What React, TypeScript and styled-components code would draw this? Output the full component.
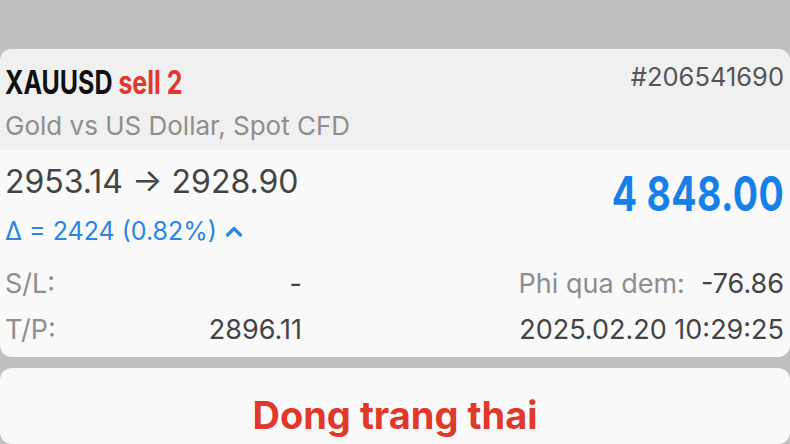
import React from 'react';
import styled, { createGlobalStyle } from 'styled-components';

const GlobalStyle = createGlobalStyle`
  html, body {
    margin: 0;
    padding: 0;
    background: #c0c0c0;
  }
  body {
    font-family: Inter, "Liberation Sans", Arial, sans-serif;
  }
`;

const Page = styled.div`
  width: 790px;
  height: 444px;
  overflow: hidden;
  padding-top: 49px;
  box-sizing: border-box;
  display: flex;
  flex-direction: column;
  gap: 11px;
`;

const Card = styled.div`
  background: #f9f9f9;
  border-radius: 12px;
  overflow: hidden;
`;

const Header = styled.div`
  background: #f0f0f0;
  height: 101px;
  box-sizing: border-box;
  padding: 13px 6px 0 5px;
  display: flex;
  flex-direction: column;
`;

const HeaderRow = styled.div`
  display: flex;
  justify-content: space-between;
  align-items: flex-start;
`;

// condensed display face, narrowed from Inter bold
const Condensed = styled.span<{ $origin: 'left' | 'right' }>`
  display: inline-block;
  font-weight: 700;
  transform: scaleX(0.78);
  transform-origin: ${p => p.$origin};
  white-space: nowrap;
`;

const Symbol = styled.div`
  font-size: 32px;
  line-height: 42px;
  color: #111;
`;

const Side = styled.span`
  color: #e0392b;
`;

const Ticket = styled.div`
  font-size: 25.5px;
  line-height: 30px;
  color: #555;
`;

const Description = styled.div`
  font-size: 26px;
  line-height: 43px;
  color: #8e8e8e;
`;

const Body = styled.div`
  height: 207px;
  box-sizing: border-box;
  padding: 13px 6px 0 5px;
  display: flex;
  flex-direction: column;
`;

const TopRow = styled.div`
  display: flex;
  justify-content: space-between;
  align-items: flex-start;
`;

const PriceColumn = styled.div`
  display: flex;
  flex-direction: column;
`;

const Prices = styled.div`
  font-size: 32px;
  line-height: 38px;
  color: #444;
`;

const Delta = styled.div`
  margin-top: 12px;
  display: flex;
  align-items: center;
  gap: 8px;
  font-size: 25px;
  line-height: 36px;
  color: #2a86e2;
`;

const Profit = styled.div`
  margin-top: 3px;
  font-size: 48px;
  line-height: 56px;
  color: #1581e8;
  letter-spacing: 0.5px;
`;

const Stats = styled.div`
  margin-top: 12px;
  display: flex;
  flex-direction: column;
`;

const StatRow = styled.div`
  display: flex;
  align-items: baseline;
  font-size: 27px;
  line-height: 46px;
`;

const LeftStat = styled.div`
  width: 297px;
  display: flex;
  justify-content: space-between;
`;

const RightStat = styled.div`
  flex: 1;
  display: flex;
  justify-content: flex-end;
  gap: 16px;
`;

const Label = styled.span`
  color: #8e8e8e;
`;

const Value = styled.span`
  color: #444;
`;

const ActionCard = styled(Card)`
  flex: 1;
  display: flex;
  justify-content: center;
  padding-top: 22px;
`;

const CloseButton = styled.button`
  border: none;
  background: none;
  padding: 0;
  height: 50px;
  line-height: 50px;
  font-family: Inter, "Liberation Sans", sans-serif;
  font-weight: 700;
  font-size: 38px;
  color: #e0392b;
  cursor: pointer;
`;

const ChevronUp = () => (
  <svg width="18" height="12" viewBox="0 0 18 12" fill="none">
    <path d="M2.5 10 L9 3.5 L15.5 10" stroke="#2a86e2" strokeWidth="3.2" strokeLinecap="round" strokeLinejoin="round" />
  </svg>
);

export default function App() {
  return (
    <>
      <GlobalStyle />
      <Page>
        <Card>
          <Header>
            <HeaderRow>
              <Symbol>
                <Condensed $origin="left">
                  XAUUSD <Side>sell 2</Side>
                </Condensed>
              </Symbol>
              <Ticket>#206541690</Ticket>
            </HeaderRow>
            <Description>Gold vs US Dollar, Spot CFD</Description>
          </Header>
          <Body>
            <TopRow>
              <PriceColumn>
                <Prices>2953.14 → 2928.90</Prices>
                <Delta>
                  Δ = 2424 (0.82%) <ChevronUp />
                </Delta>
              </PriceColumn>
              <Profit>
                <Condensed $origin="right">4 848.00</Condensed>
              </Profit>
            </TopRow>
            <Stats>
              <StatRow>
                <LeftStat>
                  <Label>S/L:</Label>
                  <Value>-</Value>
                </LeftStat>
                <RightStat>
                  <Label>Phi qua dem:</Label>
                  <Value>-76.86</Value>
                </RightStat>
              </StatRow>
              <StatRow>
                <LeftStat>
                  <Label>T/P:</Label>
                  <Value>2896.11</Value>
                </LeftStat>
                <RightStat>
                  <Value>2025.02.20 10:29:25</Value>
                </RightStat>
              </StatRow>
            </Stats>
          </Body>
        </Card>
        <ActionCard>
          <CloseButton>Dong trang thai</CloseButton>
        </ActionCard>
      </Page>
    </>
  );
}
